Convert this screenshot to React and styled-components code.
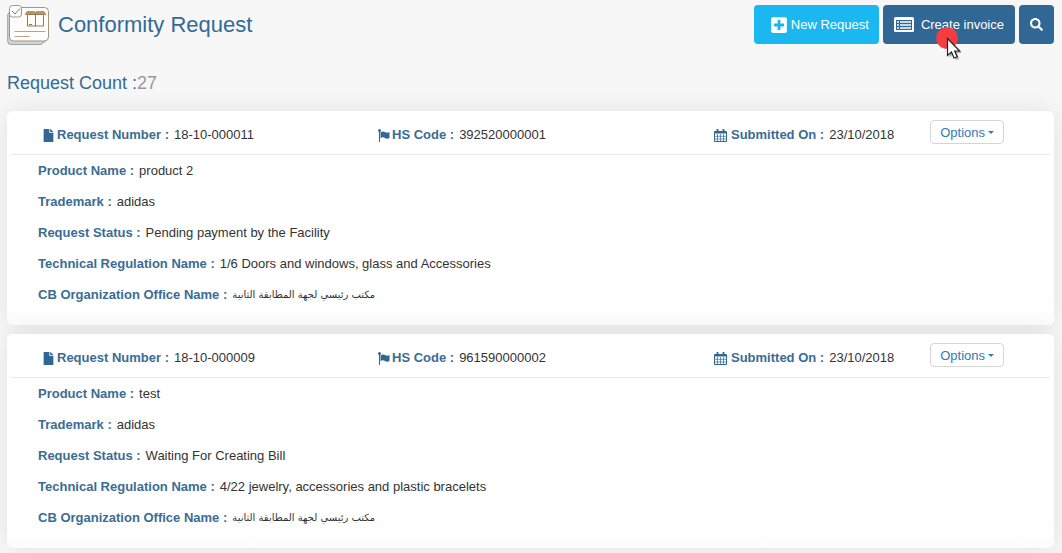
import React from "react";
import styled, { createGlobalStyle } from "styled-components";
import { FaFile, FaSearch, FaPlusSquare } from "react-icons/fa";

const GlobalStyle = createGlobalStyle`
  * {
    box-sizing: border-box;
  }
  body {
    margin: 0;
    background: #f7f7f7;
    color: #333;
    font-family: "Liberation Sans", Arial, "DejaVu Sans", sans-serif;
    font-size: 13px;
    line-height: 16px;
  }
`;

const Page = styled.main`
  padding: 5px 8px 5px 7px;
`;

const TopBar = styled.header`
  display: flex;
  justify-content: space-between;
  align-items: flex-start;
`;

const Brand = styled.div`
  display: flex;
  align-items: center;
  gap: 9px;
`;

const Title = styled.h1`
  margin: 0;
  color: #336a96;
  font-size: 22px;
  line-height: 40px;
  font-weight: 400;
`;

const Actions = styled.div`
  display: flex;
  gap: 4px;
`;

const ActionButton = styled.button`
  display: flex;
  align-items: center;
  justify-content: center;
  gap: ${({ $gap }) => $gap || 0}px;
  height: 39px;
  padding: 0 ${({ $wide }) => ($wide ? 10 : 11)}px 0 ${({ $wide }) => ($wide ? 16 : 11)}px;
  border: 0;
  border-radius: 4px;
  background: ${({ $primary }) => ($primary ? "#1ab7f1" : "#306795")};
  color: #fff;
  font-family: inherit;
  font-size: 13px;
`;

const ActionLink = styled(ActionButton)`
  position: relative;
`;

const Pointer = styled.svg`
  position: absolute;
  left: 52px;
  top: 20px;
  pointer-events: none;
  overflow: visible;
`;

const Count = styled.h2`
  margin: 27px 0 17px;
  color: #336a96;
  font-size: 18px;
  line-height: 22px;
  font-weight: 400;

  span {
    color: #999;
  }
`;

const List = styled.section`
  display: flex;
  flex-direction: column;
  gap: 9px;
`;

const Card = styled.article`
  border-radius: 6px;
  background: linear-gradient(#fff 85%, #fcfcfc);
  box-shadow: 0 0 24px rgba(0, 0, 0, 0.09);
`;

const CardHead = styled.div`
  display: grid;
  grid-template-columns: repeat(3, 1fr);
  margin: 0 4px;
  padding: 9px 0 5px 31px;
  border-bottom: 1px solid #e9e9e9;
`;

const HeadCell = styled.div`
  display: flex;
  align-items: flex-start;
  white-space: nowrap;
`;

const HeadField = styled.div`
  display: flex;
  align-items: center;
  padding: 7px 0 6px;

  svg {
    flex: none;
    margin-right: ${({ $gap }) => $gap || 2}px;
    color: #306795;
  }
`;

const Label = styled.span`
  margin-right: 5px;
  color: #3a6c94;
  font-weight: 700;
`;

const OptionsButton = styled.button`
  display: flex;
  align-items: center;
  gap: 3px;
  height: 24px;
  margin-left: 36px;
  padding: 0 9px;
  border: 1px solid #d5d5d5;
  border-radius: 4px;
  background: #fff;
  color: #337ab7;
  font-family: inherit;
  font-size: 13px;
`;

const Details = styled.div`
  display: flex;
  flex-direction: column;
  gap: 15px;
  padding: 8px 31px 22px;
`;

const Detail = styled.div`
  display: flex;
  height: 16px;
`;

const Arabic = styled.span`
  font-family: "DejaVu Sans", sans-serif;
  font-size: 10px;
`;

const requests = [
  {
    number: "18-10-000011",
    hsCode: "392520000001",
    date: "23/10/2018",
    product: "product 2",
    trademark: "adidas",
    status: "Pending payment by the Facility",
    regulation: "1/6 Doors and windows, glass and Accessories",
    office: "مكتب رئيسي لجهة المطابقة الثانية",
  },
  {
    number: "18-10-000009",
    hsCode: "961590000002",
    date: "23/10/2018",
    product: "test",
    trademark: "adidas",
    status: "Waiting For Creating Bill",
    regulation: "4/22 jewelry, accessories and plastic bracelets",
    office: "مكتب رئيسي لجهة المطابقة الثانية",
  },
];

const LogoIcon = () => (
  <svg width="42" height="40" viewBox="0 0 42 40" fill="none" aria-hidden="true">
    <path d="M2.500 7 .7 9.500V36q0 3.500 3.500 3.500H34l4.500-3.500z" fill="#d4d4d4" stroke="#8e8e8e" strokeWidth=".8" />
    <rect x="2.500" y="2.500" width="39" height="33.500" rx="4" fill="#fdfdfc" stroke="#a5957c" />
    <path d="M7.500 26.500h31M7.500 31.500h15" stroke="#bca27e" />
    <path d="M20.500 9.500h16v11.500h-16zM28.500 9.500v11.500M22 19.500h3" stroke="#9b7443" />
    <path d="M20 6.500h7.500l1 1 1-1H37l2 3h-9l-1.500-1-1.500 1h-9z" fill="#b8946a" stroke="#9b7443" strokeWidth=".6" />
    <rect x="2.500" y=".5" width="12" height="11.500" rx="3" fill="#fff" stroke="#a5957c" />
    <path d="m5 6 3 3 5-5.500" stroke="#8c7a5e" />
  </svg>
);

const ListIcon = () => (
  <svg width="20" height="15" viewBox="0 0 20 15" aria-hidden="true">
    <rect width="20" height="15" rx="1.500" fill="#fff" />
    <path d="M2 3h16v10H2z" fill="#306795" />
    <path d="M3 5h2M6 5h11M3 8h2M6 8h11M3 11h2M6 11h11" stroke="#fff" strokeWidth="1.300" />
  </svg>
);

const FlagIcon = () => (
  <svg width="12" height="13" viewBox="0 0 12 13" fill="currentColor" aria-hidden="true">
    <circle cx="1.500" cy="1.500" r="1.500" />
    <path d="M1 2h1v11H1z" />
    <path d="M2.500 3.200Q5 1.700 7 3t4.500 0v6q-2.500 1.300-4.500 0t-4.500 0z" />
  </svg>
);

const CalendarIcon = () => (
  <svg width="13" height="13" viewBox="0 0 13 13" fill="none" stroke="currentColor" aria-hidden="true">
    <path d="M.5 2.500h12v10H.5z" />
    <path d="M1 3.500h11" strokeWidth="2" />
    <path d="M3.500 0v3M9.500 0v3" strokeWidth="1.800" />
    <path d="M3.500 5v7M6.500 5v7M9.500 5v7M1 7.300h11M1 10h11" strokeWidth=".7" />
  </svg>
);

const Caret = () => (
  <svg width="6" height="3" viewBox="0 0 6 3" aria-hidden="true">
    <path d="M0 0h6L3 3z" fill="currentColor" />
  </svg>
);

const PointerMark = () => (
  <Pointer width="28" height="36" viewBox="0 0 28 36" aria-hidden="true">
    <circle cx="12" cy="13" r="10.800" fill="#f43d40" />
    <path d="M14.500 15.500v17l4-3.500 2.500 6 3.200-1.300-2.500-5.700h5z" fill="#000" opacity=".3" />
    <path d="M12.500 13.500v17l4-3.500 2.500 6 3.200-1.300-2.500-5.700h5z" fill="#fff" stroke="#222" strokeWidth="1.200" />
  </Pointer>
);

const DetailRow = ({ label, children }) => (
  <Detail>
    <Label>{label} :</Label>
    {children}
  </Detail>
);

const RequestCard = ({ request }) => (
  <Card>
    <CardHead>
      <HeadCell>
        <HeadField>
          <FaFile size={13} />
          <Label>Request Number :</Label>
          {request.number}
        </HeadField>
      </HeadCell>
      <HeadCell>
        <HeadField>
          <FlagIcon />
          <Label>HS Code :</Label>
          {request.hsCode}
        </HeadField>
      </HeadCell>
      <HeadCell>
        <HeadField $gap={4}>
          <CalendarIcon />
          <Label>Submitted On :</Label>
          {request.date}
        </HeadField>
        <OptionsButton type="button">
          Options
          <Caret />
        </OptionsButton>
      </HeadCell>
    </CardHead>
    <Details>
      <DetailRow label="Product Name">{request.product}</DetailRow>
      <DetailRow label="Trademark">{request.trademark}</DetailRow>
      <DetailRow label="Request Status">{request.status}</DetailRow>
      <DetailRow label="Technical Regulation Name">{request.regulation}</DetailRow>
      <DetailRow label="CB Organization Office Name">
        <Arabic lang="ar" dir="rtl">{request.office}</Arabic>
      </DetailRow>
    </Details>
  </Card>
);

const App = () => (
  <>
    <GlobalStyle />
    <Page>
      <TopBar>
        <Brand>
          <LogoIcon />
          <Title>Conformity Request</Title>
        </Brand>
        <Actions>
          <ActionButton type="button" $primary $wide $gap={3}>
            <FaPlusSquare size={18} />
            New Request
          </ActionButton>
          <ActionLink type="button" $gap={7}>
            <ListIcon />
            Create invoice
            <PointerMark />
          </ActionLink>
          <ActionButton type="button" aria-label="Search">
            <FaSearch size={13} />
          </ActionButton>
        </Actions>
      </TopBar>
      <Count>
        Request Count :<span>27</span>
      </Count>
      <List>
        {requests.map((request) => (
          <RequestCard key={request.number} request={request} />
        ))}
      </List>
    </Page>
  </>
);

export default App;
